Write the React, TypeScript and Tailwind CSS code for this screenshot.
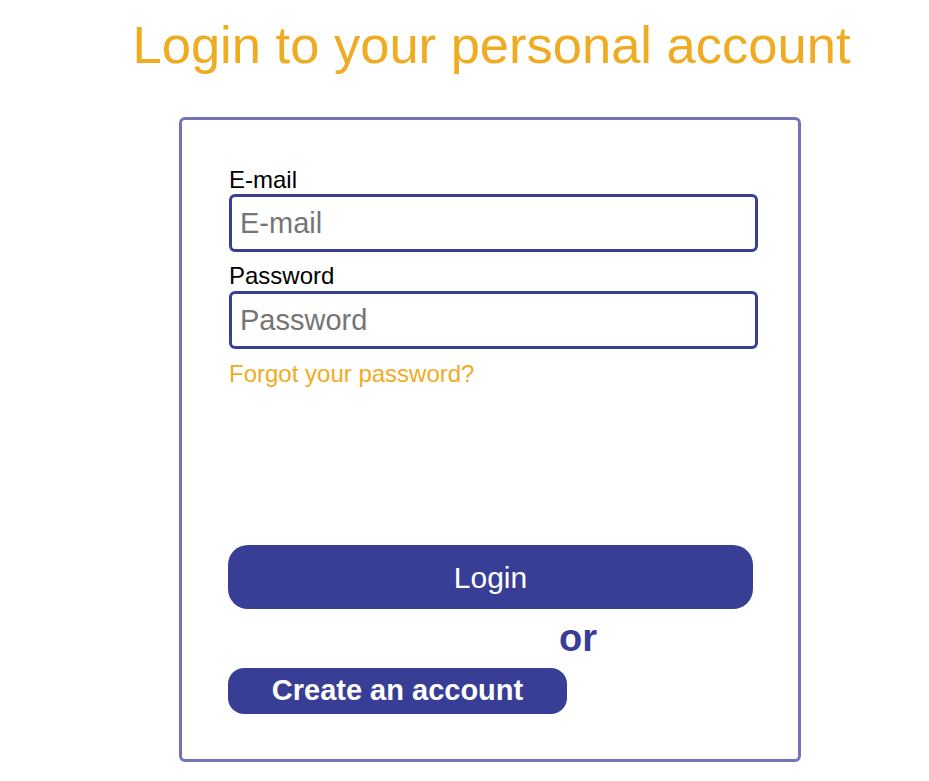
import React from "react";

export default function App() {
  const font = { fontFamily: '"Liberation Sans", Arial, sans-serif' };
  return (
    <div className="min-h-[781px] w-full bg-white" style={font}>
      <div className="ml-[179px] w-[622px] pt-[13px]">
        <div className="flex justify-center">
          <h1 className="ml-[3px] whitespace-nowrap text-[52.5px] leading-[64px] font-normal text-[#efac22]">
            Login to your personal account
          </h1>
        </div>
        <div className="mt-[40px] h-[645px] w-[622px] rounded-[6px] border-[3px] border-[#7274b6] pl-[47px] pt-[47px]">
          <label className="block text-[24px] leading-[26px] text-black">E-mail</label>
          <input
            type="text"
            placeholder="E-mail"
            className="mt-[1px] block h-[58px] w-[529px] rounded-[6px] border-[3px] border-[#373f96] bg-white px-[8px] text-[29px] text-black outline-none placeholder:text-[#757575]"
          />
          <label className="mt-[11px] block text-[24px] leading-[26px] text-black">Password</label>
          <input
            type="password"
            placeholder="Password"
            className="mt-[2px] block h-[58px] w-[529px] rounded-[6px] border-[3px] border-[#373f96] bg-white px-[8px] text-[29px] text-black outline-none placeholder:text-[#757575]"
          />
          <div className="mt-[11px] text-[24px] leading-[27px] text-[#efac22]">Forgot your password?</div>
          <button className="mt-[158px] -ml-[1px] flex h-[64px] w-[525px] items-center justify-center rounded-[20px] bg-[#383e96] text-[30px] text-white">
            Login
          </button>
          <div className="mt-[7px] ml-[330px] text-[38px] font-bold leading-[44px] text-[#383e96]">or</div>
          <button className="mt-[8px] -ml-[1px] flex h-[46px] w-[339px] items-center justify-center rounded-[16px] bg-[#383e96] text-[29px] font-bold text-white">
            Create an account
          </button>
        </div>
      </div>
    </div>
  );
}
